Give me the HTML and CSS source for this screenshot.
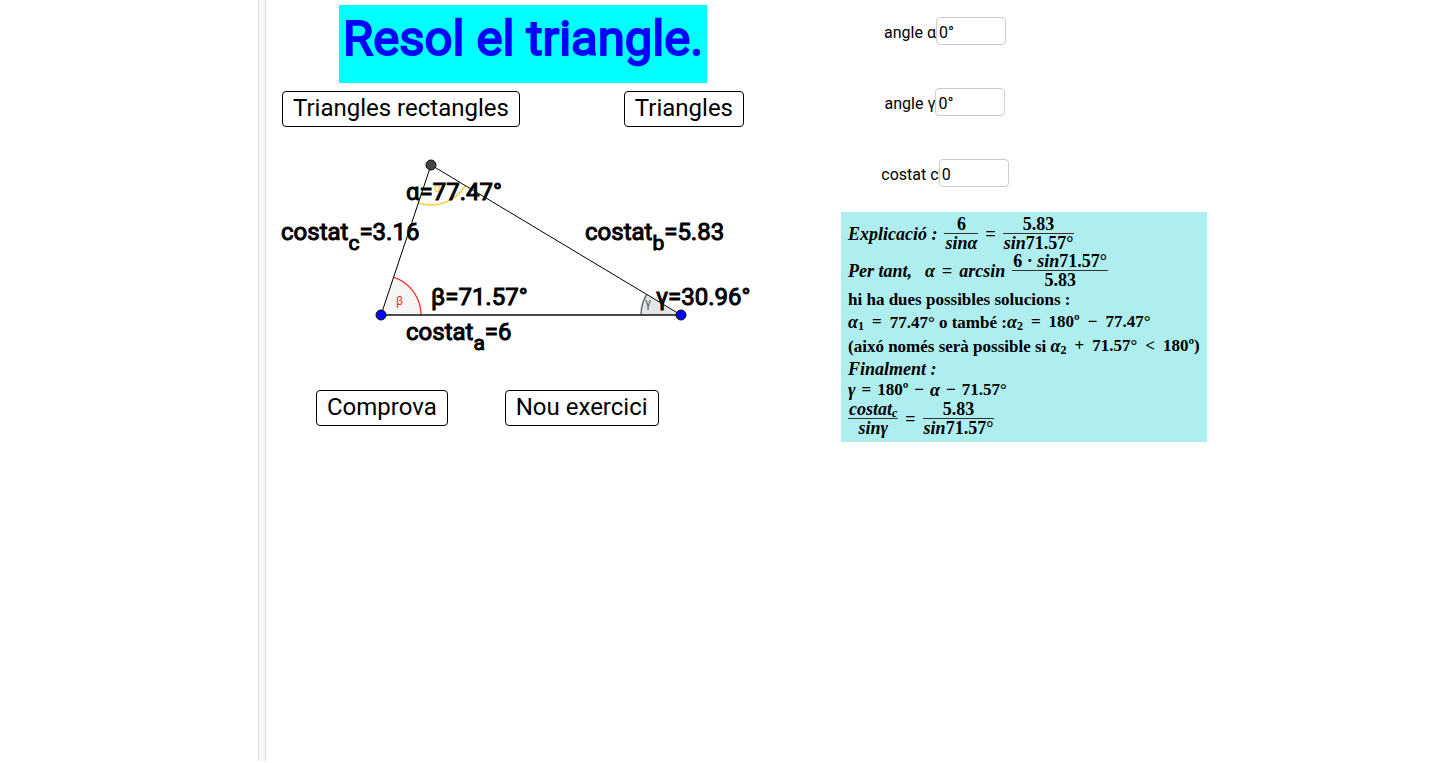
FILE: index.html
```html
<!DOCTYPE html>
<html lang="ca">
<head>
    <meta charset="utf-8">
    <title>Resol el triangle</title>
    <link rel="stylesheet" href="styles.css">
</head>
<body>
    <div class="algebra"></div>
    <div class="splitter"></div>
    <main class="exercise">
        <h1>Resol el triangle.</h1>
        <div class="buttons">
            <button type="button">Triangles rectangles</button>
            <button type="button">Triangles</button>
        </div>
        <svg class="triangle" width="490" height="220" viewBox="275 145 490 220">
            <!-- angles -->
            <path d="M381 315L393.600 277.100A40 40 0 0 1 421 315z" fill="#f8f5f7"/>
            <path d="M393.600 277.100A40 40 0 0 1 421 315" fill="none" stroke="#f32" stroke-width="1.300"/>
            <path d="M681 315H641A40 40 0 0 1 646.700 294.400z" fill="#e5e5e5"/>
            <path d="M641 315A40 40 0 0 1 646.700 294.400" fill="none" stroke="#465c60" stroke-width="1.300"/>
            <path d="M418.400 203A40 40 0 0 0 465.300 185.600" fill="none" stroke="#fc3" stroke-width="1.500"/>
            <text class="mark" x="434" y="192" fill="#fc3">α</text>
            <text class="mark" x="396" y="305" fill="#f32">β</text>
            <text class="mark" x="645" y="307" fill="#465c60">γ</text>
            <!-- sides -->
            <path d="M381 315L431 165L681 315" fill="none" stroke="#000"/>
            <path d="M381 315H681" stroke="#111" stroke-width="1.600"/>
            <circle cx="431" cy="165" r="5" fill="#444" stroke="#111"/>
            <circle cx="381" cy="315" r="5" fill="#00f" stroke="#111"/>
            <circle cx="681" cy="315" r="5" fill="#00f" stroke="#111"/>
            <g class="values">
                <text x="406" y="200">α=77.47°</text>
                <text x="431" y="305">β=71.57°</text>
                <text x="656" y="305">γ=30.96°</text>
                <text x="281" y="240">costat<tspan class="sub" dy="10">c</tspan><tspan dy="-10">=3.16</tspan></text>
                <text x="585" y="240">costat<tspan class="sub" dy="10">b</tspan><tspan dy="-10">=5.83</tspan></text>
                <text x="406" y="340">costat<tspan class="sub" dy="10">a</tspan><tspan dy="-10">=6</tspan></text>
            </g>
        </svg>
        <div class="buttons actions">
            <button type="button">Comprova</button>
            <button type="button">Nou exercici</button>
        </div>
    </main>
    <aside class="answers">
        <form class="fields">
            <div class="field"><label for="alpha">angle α</label><input id="alpha" type="text" value="0°"></div>
            <div class="field"><label for="gamma">angle γ</label><input id="gamma" type="text" value="0°"></div>
            <div class="field"><label for="side">costat c</label><input id="side" type="text" value="0"></div>
        </form>
        <section class="explanation">
            <div class="row tall">
                <i>Explicació :</i>
                <span class="frac"><span>6</span><span><i>sinα</i></span></span>
                <span>=</span>
                <span class="frac"><span>5.83</span><span><i>sin</i>71.57°</span></span>
            </div>
            <div class="row tall">
                <i>Per tant,</i>
                <i class="indent">α</i>
                <span>=</span>
                <i>arcsin</i>
                <span class="frac"><span>6 · <i>sin</i>71.57°</span><span>5.83</span></span>
            </div>
            <div class="row">hi ha dues possibles solucions :</div>
            <div class="row loose"><span><i>α</i><sub>1</sub></span><span>=</span><span>77.47° o també :<i>α</i><sub>2</sub></span><span>=</span><span>180º</span><span>−</span><span>77.47°</span></div>
            <div class="row loose"><span>(aixó només serà possible si <i>α</i><sub>2</sub></span><span>+</span><span>71.57°</span><span>&lt;</span><span>180º)</span></div>
            <div class="row"><i>Finalment :</i></div>
            <div class="row"><i>γ</i><span>=</span><span>180º</span><span>−</span><i>α</i><span>−</span><span>71.57°</span></div>
            <div class="row tall">
                <span class="frac"><span><i>costat<sub>c</sub></i></span><span><i>sinγ</i></span></span>
                <span>=</span>
                <span class="frac"><span>5.83</span><span><i>sin</i>71.57°</span></span>
            </div>
        </section>
    </aside>
</body>
</html>
```
FILE: styles.css
```css
* {
    box-sizing: border-box;
}

body {
    display: flex;
    margin: 0;
    min-height: 100vh;
    padding-bottom: 2px;
    background: #fff;
    color: #000;
    font-family: Roboto, sans-serif;
}

.algebra {
    flex: 1 1 258px;
    max-width: 258px;
}

.splitter {
    flex: none;
    width: 8px;
    border: solid #ddd;
    border-width: 0 1px;
    background: #f8f6f7;
}

.exercise {
    flex: none;
    padding: 5px 0 0 16px;
}

h1 {
    width: fit-content;
    height: 78px;
    margin: 0 0 8px 57px;
    padding: 4px 4px 0;
    background: #0ff;
    color: #00f;
    font-size: 49px;
    font-weight: normal;
    line-height: 60px;
    -webkit-text-stroke: 2px #00f;
}

.buttons {
    display: flex;
    justify-content: space-between;
    width: 462px;
}

.actions {
    justify-content: flex-start;
    gap: 57px;
    padding-left: 34px;
}

button {
    height: 36px;
    padding: 0 10px 2px;
    border: 1px solid #000;
    border-radius: 4px;
    background: #fff;
    color: #000;
    font: 24px/32px Roboto, sans-serif;
}

.triangle {
    display: block;
    margin: 18px 0 25px -7px;
    font-size: 24px;
}

.values {
    stroke: #000;
    stroke-width: 1px;
}

.sub {
    font-size: 21px;
}

.mark {
    font-size: 12px;
}

.answers {
    padding: 17px 0 0 76px;
}

.fields {
    display: flex;
    flex-direction: column;
    align-items: center;
    gap: 43px;
    width: 208px;
    margin-bottom: 25px;
}

.field {
    display: flex;
    align-items: center;
    font-size: 16px;
}

label {
    padding-top: 3px;
}

input {
    width: 70px;
    height: 28px;
    padding: 3px 2px 0;
    border: 1px solid #ccc;
    border-radius: 4px;
    color: #000;
    font: 16px Roboto, sans-serif;
}

.explanation {
    width: fit-content;
    padding: 3px 7px 5px;
    background: #afeeee;
    font: bold 17px/20px "Liberation Serif", serif;
}

.row {
    display: flex;
    align-items: center;
    gap: 6px;
    height: 21px;
    white-space: nowrap;
}

.loose {
    gap: 8px;
    height: 24px;
}

.tall {
    gap: 7px;
    height: 37px;
    font-size: 18px;
}

.row i {
    font-size: 18px;
}

.indent {
    padding-left: 6px;
}

.frac {
    text-align: center;
    line-height: 18px;
}

.frac > span {
    display: block;
    height: 18px;
    padding: 0 1px;
}

.frac > span + span {
    height: 19px;
    border-top: 1px solid #333;
}

.row sub {
    font-size: 12px;
    line-height: 0;
    vertical-align: -2px;
}
```
